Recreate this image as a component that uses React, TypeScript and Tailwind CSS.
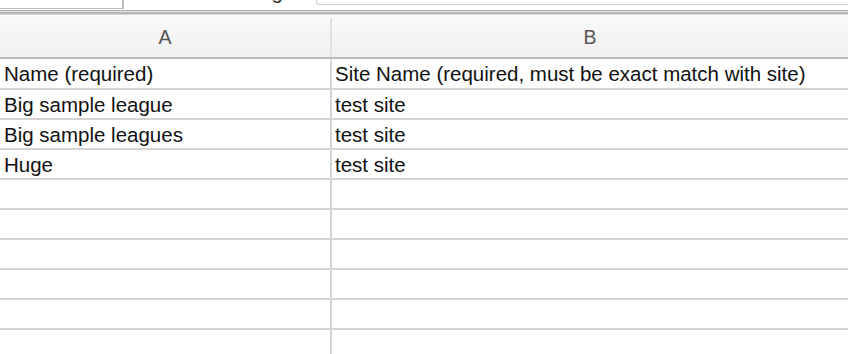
import React from "react";

const rows: [string, string][] = [
  ["Name (required)", "Site Name (required, must be exact match with site)"],
  ["Big sample league", "test site"],
  ["Big sample leagues", "test site"],
  ["Huge", "test site"],
  ["", ""],
  ["", ""],
  ["", ""],
  ["", ""],
  ["", ""],
  ["", ""],
];

const App: React.FC = () => {
  return (
    <div className="h-[354px] w-[848px] overflow-hidden bg-white font-['Liberation_Sans',Arial,sans-serif] text-[#111]">
      {/* tab strip */}
      <div className="flex h-[10px]">
        <div className="h-[9px] w-[124px] border-r-2 border-b border-[#bdbdbd] bg-white" />
        <div className="w-[192px] overflow-hidden">
          <div className="-mt-[20px] pl-[86px] text-[20.5px] leading-[24px] text-[#333] whitespace-nowrap">
            Leading
          </div>
        </div>
        <div className="h-[5px] flex-1 rounded-bl-[3px] border-l border-b border-[#d0d0d0]" />
      </div>

      {/* toolbar edge */}
      <div className="h-px bg-[#a9a9a9]" />
      <div className="h-px bg-[#e6e6e6]" />
      <div className="h-[2px] bg-[#b6b6b6]" />
      <div className="h-px bg-[#d8d8d8]" />

      {/* column headers */}
      <div className="flex h-[44px] border-b-2 border-[#bcbcbc] bg-gradient-to-b from-[#fafafa] to-[#f0f0f0] pt-[3px] text-[19.5px] text-[#555]">
        <div className="flex w-[332px] items-center justify-center border-r-2 border-[#e2e2e2]">A</div>
        <div className="flex flex-1 items-center justify-center">B</div>
      </div>

      {/* cells */}
      {rows.map(([a, b], i) => (
        <div
          key={i}
          className={`flex text-[20.5px] leading-[22px] ${i === 0 ? "h-[31px]" : "h-[30px]"}`}
        >
          <div className="w-[332px] whitespace-nowrap border-r-2 border-b-2 border-[#d4d4d4] pl-[4px] pt-[4px]">{a}</div>
          <div className="flex-1 whitespace-nowrap border-b-2 border-[#d4d4d4] pl-[3px] pt-[4px]">{b}</div>
        </div>
      ))}
    </div>
  );
};

export default App;
